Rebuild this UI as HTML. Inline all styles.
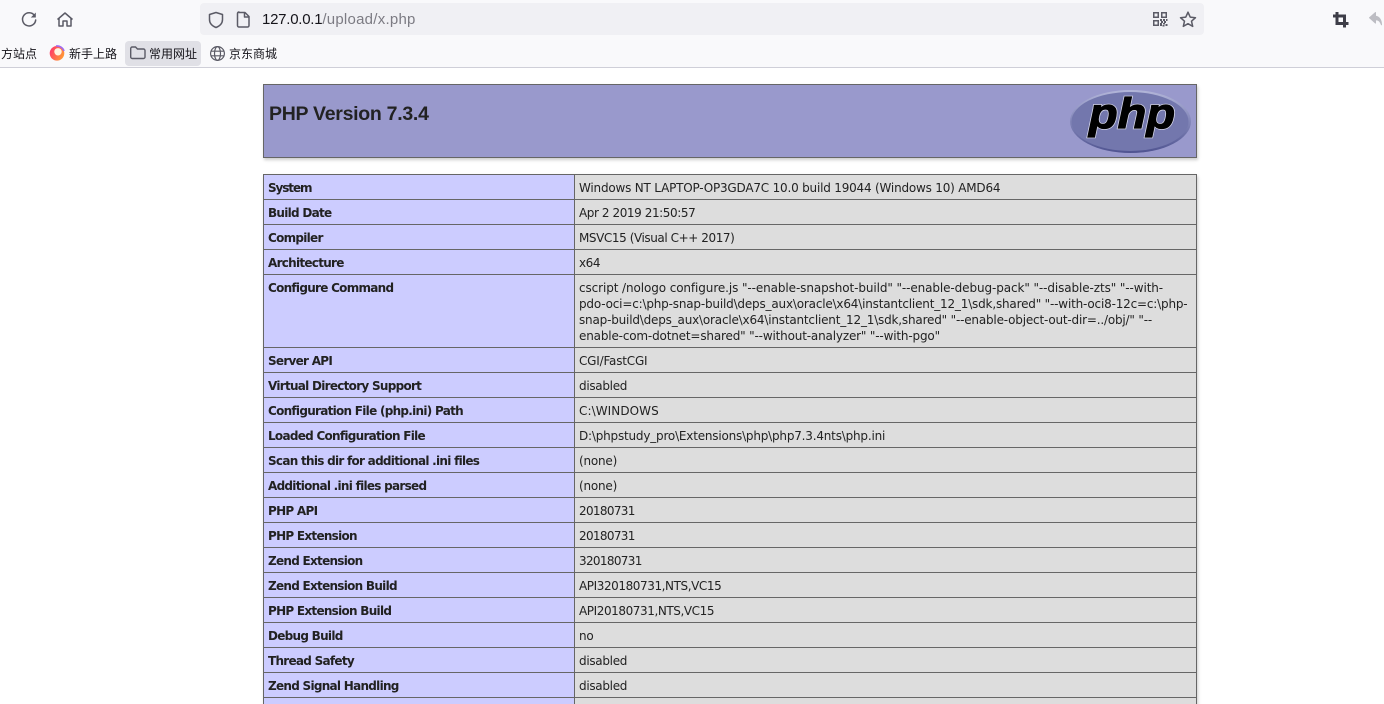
<!DOCTYPE html>
<html lang="en"><head><meta charset="utf-8"><title>phpinfo()</title>
<style>
html,body{margin:0;padding:0;width:1384px;height:704px;overflow:hidden;background:#fff}
#w{position:absolute;left:0;top:0;width:1384px;height:704px;overflow:hidden;background:#fff}
#bar{position:absolute;left:0;top:0;width:1384px;height:67px;background:#f9f9fb;border-bottom:1px solid #cfcfd8}
#url{position:absolute;left:200px;top:3px;width:1004px;height:32px;background:#f0f0f4;border-radius:4px}
.a{position:absolute}
.u{left:262px;top:10px;font:15px/18px "Liberation Sans",sans-serif;color:#15141a;white-space:nowrap;letter-spacing:-.25px}
.u span{color:#7c7b83;letter-spacing:.25px}
.b{top:45px;font:12px/18px "Liberation Sans","Noto Sans CJK SC",sans-serif;color:#15141a;white-space:nowrap}
#fold{position:absolute;left:125px;top:41px;width:76px;height:25px;background:#e0e0e6;border-radius:4px}
#h{position:absolute;left:263px;top:84px;width:932px;height:72px;background:#9999cc;border:1px solid #666;box-shadow:1px 2px 3px #ccc}
#h div{position:absolute;left:5px;top:17px;font:bold 19.5px/24px "Liberation Sans",sans-serif;letter-spacing:-.28px;color:#222;white-space:nowrap}
table{position:absolute;left:263px;top:174px;width:934px;border-collapse:collapse;table-layout:fixed;box-shadow:1px 2px 3px #ccc;font:12px/16px "DejaVu Sans",sans-serif;letter-spacing:-.2px;color:#222}
td{border:1px solid #666;padding:5px 4px 3px 4px;vertical-align:top;height:16px}
.e{width:302px;background:#ccccff;font-weight:bold;letter-spacing:-.72px}
.v{background:#dddddd}
.d{letter-spacing:-.42px}
.n{letter-spacing:-.67px}
</style></head><body><div id="w">
<div id="bar"></div><div id="url"></div>
<svg class="a" style="left:0;top:0" width="1384" height="68" fill="none" stroke="#5b5b66" stroke-width="1.5">
<path d="M34.5 15.5A6.6 6.6 0 1 0 35.7 20" stroke-linecap="round"/><path d="M35.8 12.5v5h-5z" fill="#5b5b66" stroke="none"/>
<path d="M57.5 19.5 65 13l7.5 6.5M59 18.5V26h4v-5h4v5h4v-7.5" stroke-linejoin="round"/>
<path d="M216 12.5l6.5 2v5c0 4-2.7 6.500-6.500 8-3.800-1.500-6.500-4-6.500-8v-5z" stroke-linejoin="round"/>
<path d="M239 12.500h6l4 4v9a1.500 1.500 0 0 1-1.500 1.500h-8.500a1.500 1.500 0 0 1-1.500-1.500v-12a1.500 1.500 0 0 1 1.500-1.500zM244.500 12.500v4.500h4.500" stroke-linejoin="round"/>
<g stroke="none" fill="#5b5b66"><path d="M1153 12h6v6h-6zM1154.500 13.500v3h3v-3zM1161 12h6v6h-6zM1162.500 13.500v3h3v-3zM1153 20h6v6h-6zM1154.500 21.500v3h3v-3z" fill-rule="evenodd"/><path d="M1160 19h2v2h-2zM1163 19h2v2h-2zM1166 19h1.500v2H1166zM1161 21h2v2h-2zM1164 21h2v2h-2zM1160 23h2v3h-2zM1163 23h2v1.500h-2zM1165.500 24h2v2h-2zM1162.500 25h2v1.500h-2z"/></g>
<path d="M1188 12.200l2.200 4.900 5.300.6-4 3.500 1.200 5.200-4.700-2.700-4.700 2.700 1.200-5.200-4-3.500 5.300-.6z" stroke-linejoin="round"/>
<path d="M1337 12v11.500h11.500M1333 16h11.500V27.500" stroke="#3e3e48" stroke-width="3"/>
<path d="M1375.500 12.500l-6 5.300 6 5.300v-3.300c3 0 4.500 1 6 5 0-4.500-2-8.200-6-8.500z" fill="#bdbdc3" stroke="#bdbdc3" stroke-width="1" stroke-linejoin="round"/>
</svg>
<div class="a u" style="top:11px">127.0.0.1<span>/upload/x.php</span></div>
<div class="a b" style="left:1px">方站点</div>
<svg class="a" style="left:49px;top:45px" width="16" height="16"><defs><linearGradient id="fx" x1="0" y1=".3" x2="1" y2=".8"><stop offset="0" stop-color="#ff3a6a"/><stop offset="1" stop-color="#ffa030"/></linearGradient></defs><circle cx="8" cy="8.300" r="7.300" fill="url(#fx)"/><path d="M7 1A7.300 7.300 0 0 1 15 6" stroke="#a06bf0" stroke-width="1.600" fill="none"/><circle cx="9" cy="6.800" r="3.700" fill="#fff3e0"/></svg>
<div class="a b" style="left:69px">新手上路</div>
<div id="fold"></div>
<svg class="a" style="left:129px;top:44px" width="18" height="18" fill="none" stroke="#5b5b66" stroke-width="1.400"><path d="M1.700 4.500a1.500 1.500 0 0 1 1.500-1.500h3.300l2 2h6a1.500 1.500 0 0 1 1.500 1.500v6.500a1.500 1.500 0 0 1-1.500 1.500H3.200a1.500 1.500 0 0 1-1.500-1.500z"/></svg>
<div class="a b" style="left:149px">常用网址</div>
<svg class="a" style="left:209px;top:45px" width="17" height="17" fill="none" stroke="#5b5b66" stroke-width="1.200"><circle cx="8.500" cy="8.500" r="6.900"/><ellipse cx="8.500" cy="8.500" rx="3" ry="6.900"/><path d="M2 6.200h13M2 10.800h13"/></svg>
<div class="a b" style="left:229px">京东商城</div>
<div id="h"><div>PHP Version 7.3.4</div></div>
<svg class="a" style="left:1068px;top:88px" width="126" height="68"><defs><linearGradient id="lg" x1="0" y1="0" x2="0" y2="1"><stop offset="0" stop-color="#b3b6d9"/><stop offset=".5" stop-color="#8286b8"/><stop offset="1" stop-color="#4f5390"/></linearGradient></defs><ellipse cx="62.500" cy="33.500" rx="60.500" ry="31.500" fill="url(#lg)"/><ellipse cx="62" cy="33.500" rx="58.500" ry="29.500" fill="#7377ad"/>
<text x="21" y="40" font-family="Liberation Sans,sans-serif" font-size="43" font-weight="bold" font-style="italic" fill="#000" stroke="#d8d9ec" stroke-width="2.600" textLength="86" lengthAdjust="spacingAndGlyphs">php</text>
<text x="21" y="40" font-family="Liberation Sans,sans-serif" font-size="43" font-weight="bold" font-style="italic" fill="#000" stroke="#000" stroke-width="1.200" textLength="86" lengthAdjust="spacingAndGlyphs">php</text></svg>
<table>
<tr><td class="e" style="letter-spacing:-1.1px">System</td><td class="v">Windows NT LAPTOP-OP3GDA7C 10.0 build 19044 (Windows 10) AMD64</td></tr>
<tr><td class="e">Build Date</td><td class="v d">Apr 2 2019 21:50:57</td></tr>
<tr><td class="e">Compiler</td><td class="v d">MSVC15 (Visual C++ 2017)</td></tr>
<tr><td class="e">Architecture</td><td class="v d">x64</td></tr>
<tr><td class="e">Configure Command</td><td class="v"><span style="letter-spacing:-.1px">cscript /nologo configure.js "--enable-snapshot-build" "--enable-debug-pack" "--disable-zts" "--with-</span><br><span style="letter-spacing:-.185px">pdo-oci=c:\php-snap-build\deps_aux\oracle\x64\instantclient_12_1\sdk,shared" "--with-oci8-12c=c:\php-</span><br><span style="letter-spacing:-.19px">snap-build\deps_aux\oracle\x64\instantclient_12_1\sdk,shared" "--enable-object-out-dir=../obj/" "--</span><br><span style="letter-spacing:-.17px">enable-com-dotnet=shared" "--without-analyzer" "--with-pgo"</span></td></tr>
<tr><td class="e">Server API</td><td class="v">CGI/FastCGI</td></tr>
<tr><td class="e">Virtual Directory Support</td><td class="v" style="letter-spacing:-.3px">disabled</td></tr>
<tr><td class="e">Configuration File (php.ini) Path</td><td class="v" style="letter-spacing:.08px">C:\WINDOWS</td></tr>
<tr><td class="e">Loaded Configuration File</td><td class="v">D:\phpstudy_pro\Extensions\php\php7.3.4nts\php.ini</td></tr>
<tr><td class="e">Scan this dir for additional .ini files</td><td class="v">(none)</td></tr>
<tr><td class="e">Additional .ini files parsed</td><td class="v">(none)</td></tr>
<tr><td class="e">PHP API</td><td class="v n">20180731</td></tr>
<tr><td class="e">PHP Extension</td><td class="v n">20180731</td></tr>
<tr><td class="e">Zend Extension</td><td class="v n">320180731</td></tr>
<tr><td class="e">Zend Extension Build</td><td class="v d">API320180731,NTS,VC15</td></tr>
<tr><td class="e">PHP Extension Build</td><td class="v d">API20180731,NTS,VC15</td></tr>
<tr><td class="e">Debug Build</td><td class="v">no</td></tr>
<tr><td class="e">Thread Safety</td><td class="v" style="letter-spacing:-.3px">disabled</td></tr>
<tr><td class="e">Zend Signal Handling</td><td class="v" style="letter-spacing:-.3px">disabled</td></tr>
<tr><td class="e">&nbsp;</td><td class="v">&nbsp;</td></tr>
</table>
</div></body></html>
